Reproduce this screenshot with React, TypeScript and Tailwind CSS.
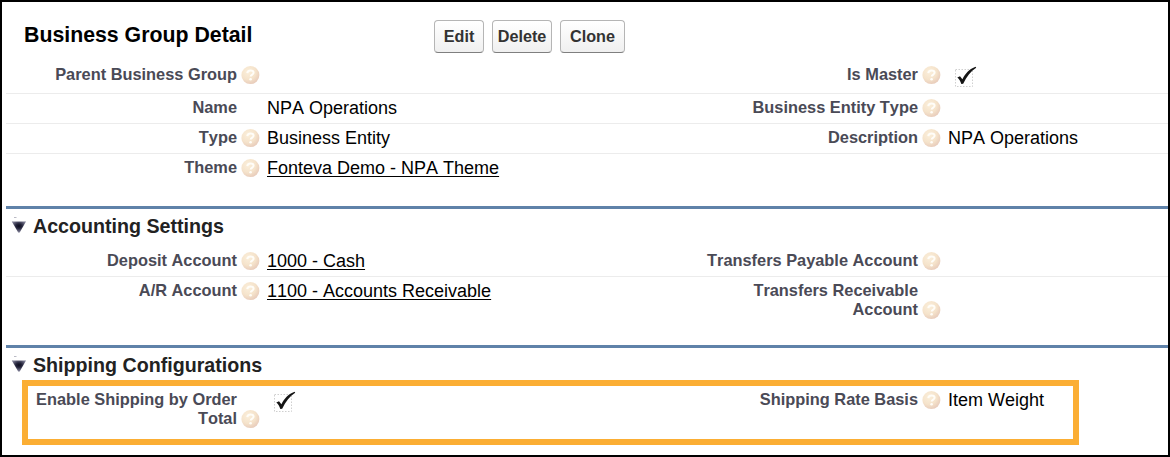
import type { ReactNode } from "react";

function Help() {
  return (
    <svg width="19" height="19" viewBox="0 0 19 19" className="block">
      <defs>
        <radialGradient id="helpFill" cx="38%" cy="32%" r="70%">
          <stop offset="0" stopColor="#fbefdb" />
          <stop offset="0.6" stopColor="#f5e3cb" />
          <stop offset="1" stopColor="#e8ccbb" />
        </radialGradient>
      </defs>
      <circle cx="9.4" cy="9.1" r="9" fill="url(#helpFill)" />
      <path d="M6.3 7.1C6.4 5.2 7.7 4.5 9.5 4.5c1.9 0 3.1.9 3.1 2.3 0 1.8-2.9 1.8-2.9 3.8" fill="none" stroke="#fffdf8" strokeWidth="2" />
      <circle cx="9.6" cy="13.2" r="1.3" fill="#fffdf8" />
    </svg>
  );
}

function Check() {
  return (
    <svg width="25" height="22" viewBox="0 0 25 22" className="block">
      <rect x="1.5" y="3.5" width="17" height="17" fill="none" stroke="#cfcfcf" strokeDasharray="1.5 1.5" />
      <path d="M3.3 11.6 L6 10.2 L8.4 13.2 C11.5 7.5 15.5 2.9 21.6 .8 L22.2 1.8 C16.5 5.4 12.6 11 9.2 17.7 L7.3 18.1 C6.4 15.3 5.3 12.8 3.3 11.6Z" fill="#141414" />
    </svg>
  );
}

interface FieldProps {
  label: ReactNode;
  help?: boolean;
  twoLine?: boolean;
  children?: ReactNode;
}

function Field({ label, help = true, twoLine = false, children }: FieldProps) {
  return (
    <div className="flex">
      <div className="w-[231px] shrink-0 text-right text-[16.38px] leading-[19px] font-bold whitespace-nowrap text-[#4a4a56]">
        {label}
      </div>
      <div className={twoLine ? "ml-1 w-[26px] shrink-0 pt-5" : "ml-1 w-[26px] shrink-0 pt-px"}>{help && <Help />}</div>
      <div className="text-[18px] leading-[20px] whitespace-nowrap text-black">{children}</div>
    </div>
  );
}

function Row({ className, children }: { className: string; children: ReactNode }) {
  return <div className={`grid grid-cols-[681px_1fr] ${className}`}>{children}</div>;
}

function SectionTitle({ children }: { children: ReactNode }) {
  return (
    <div className="flex h-[42px] border-t-[3px] border-[#5f82a9]">
      <svg width="27" height="26" viewBox="0 0 27 26" className="shrink-0">
        <defs>
          <radialGradient id="arrow" cx="50%" cy="42%" r="52%">
            <stop offset="0" stopColor="#0c0c1c" />
            <stop offset="0.4" stopColor="#23233a" />
            <stop offset="1" stopColor="#77778e" />
          </radialGradient>
        </defs>
        <path d="M8 8.5h2.5" stroke="#bbbbc5" />
        <path d="M5.8 12.5H20L13.7 23.4H12.2Z" fill="url(#arrow)" />
      </svg>
      <h2 className="pt-[6px] text-[19.65px] leading-[23px] font-bold text-[#222]">{children}</h2>
    </div>
  );
}

function Button({ className, children }: { className: string; children: ReactNode }) {
  return (
    <button
      className={`h-[33px] rounded-[4px] border border-[#b5b5b5] border-b-[#7f7f7f] bg-linear-to-b from-white to-[#f0f0f0] text-center text-[16.2px] leading-[30px] font-bold text-[#333] ${className}`}
    >
      <span className="relative -top-px">{children}</span>
    </button>
  );
}

function Value({ children }: { children: ReactNode }) {
  return <a className="underline decoration-1 underline-offset-2">{children}</a>;
}

export default function App() {
  return (
    <div className="relative h-[457px] w-[1170px] overflow-hidden border-2 border-black bg-white pl-1 font-['Liberation_Sans',Arial,sans-serif] [font-kerning:none]">
      <header className="flex h-[61px] pt-[18px] pl-[18px]">
        <h1 className="w-[410px] pt-[3px] text-[21.3px] leading-6 font-bold text-black">Business Group Detail</h1>
        <div className="flex gap-2">
          <Button className="w-[50px]">Edit</Button>
          <Button className="w-[60px]">Delete</Button>
          <Button className="w-[65px]">Clone</Button>
        </div>
      </header>

      <Row className="h-[31px] border-b border-[#ececec] pt-[2px]">
        <Field label="Parent Business Group" />
        <Field label="Is Master">
          <div className="pt-px pl-[6px]"><Check /></div>
        </Field>
      </Row>
      <Row className="h-[30px] border-b border-[#ececec] pt-1">
        <Field label="Name" help={false}>NPA Operations</Field>
        <Field label="Business Entity Type" />
      </Row>
      <Row className="h-[30px] border-b border-[#ececec] pt-1">
        <Field label="Type">Business Entity</Field>
        <Field label="Description">NPA Operations</Field>
      </Row>
      <Row className="h-[52px] pt-1">
        <Field label="Theme"><Value>Fonteva Demo - NPA Theme</Value></Field>
      </Row>

      <SectionTitle>Accounting Settings</SectionTitle>
      <Row className="h-[29px] border-b border-[#ececec] pt-[3px]">
        <Field label="Deposit Account"><Value>1000 - Cash</Value></Field>
        <Field label="Transfers Payable Account" />
      </Row>
      <Row className="h-[68px] pt-1">
        <Field label="A/R Account"><Value>1100 - Accounts Receivable</Value></Field>
        <Field label={<>Transfers Receivable<br />Account</>} twoLine />
      </Row>

      <SectionTitle>Shipping Configurations</SectionTitle>
      <Row className="pt-[3px]">
        <Field label={<>Enable Shipping by Order<br />Total</>} twoLine>
          <div className="pt-px pl-[6px]"><Check /></div>
        </Field>
        <Field label="Shipping Rate Basis">Item Weight</Field>
      </Row>
      <div className="pointer-events-none absolute top-[378px] left-5 h-[65px] w-[1057px] border-6 border-[#fbae34]" />
    </div>
  );
}
